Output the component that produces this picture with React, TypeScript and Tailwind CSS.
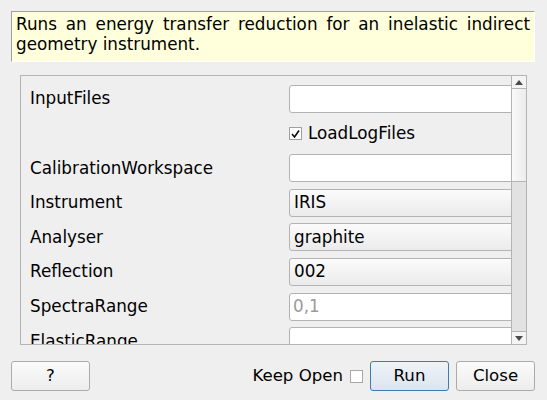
import React from "react";

const font = { fontFamily: '"DejaVu Sans", "Liberation Sans", sans-serif' };

function Label({ children }: { children: React.ReactNode }) {
  return <div className="w-[268px] shrink-0 pl-[9px] text-[16.8px] text-black whitespace-nowrap">{children}</div>;
}

function LineEdit({ placeholder }: { placeholder?: string }) {
  return (
    <div className="w-[260px] shrink-0 h-[28px] bg-white border border-[#b3b3b3] rounded-[3px] flex items-center pl-[3px] text-[16.8px] text-[#9a9a9a]">
      {placeholder}
    </div>
  );
}

function Combo({ value }: { value: string }) {
  return (
    <div className="w-[260px] shrink-0 h-[28px] border border-[#b3b3b3] rounded-[3px] flex items-center pl-[4px] text-[16.8px] text-black bg-gradient-to-b from-[#fbfbfb] to-[#ebebeb]">
      {value}
    </div>
  );
}

function Arrow({ down }: { down?: boolean }) {
  return (
    <svg width="8" height="5" viewBox="0 0 8 5">
      {down ? <polygon points="0,0 8,0 4,5" fill="#4a4a4a" /> : <polygon points="0,5 8,5 4,0" fill="#4a4a4a" />}
    </svg>
  );
}

function Button({ children, primary }: { children: React.ReactNode; primary?: boolean }) {
  return (
    <div
      className={
        "w-[79px] h-[30px] shrink-0 rounded-[3px] border flex items-center justify-center text-[16.6px] text-black " +
        (primary
          ? "border-[#3d7ab3] bg-gradient-to-b from-[#eef3f8] to-[#dce5ee]"
          : "border-[#ababab] bg-gradient-to-b from-[#fbfbfb] to-[#ededed]")
      }
    >
      {children}
    </div>
  );
}

function Row({ children }: { children: React.ReactNode }) {
  return <div className="flex items-center h-[28px] shrink-0">{children}</div>;
}

export default function App() {
  return (
    <div className="w-[547px] h-[400px] bg-[#efefef] overflow-hidden flex flex-col" style={font}>
      <div className="ml-[11px] mt-[11px] w-[524px] h-[51px] shrink-0 bg-[#ffffdc] border border-t-[#a0a0a0] border-l-[#a0a0a0] border-r-[#ffffff] border-b-[#ffffff] pl-[4px] pr-[4px] pt-[3px] text-[16.8px] leading-[19.5px] text-black text-justify">
        Runs an energy transfer reduction for an inelastic indirect geometry instrument.
      </div>

      <div className="ml-[20px] mt-[13px] w-[507px] h-[270px] shrink-0 border border-[#b4b4b4] flex">
        <div className="flex-1 overflow-hidden pt-[9px] flex flex-col gap-[6.6px]">
          <Row>
            <Label>InputFiles</Label>
            <LineEdit />
          </Row>
          <Row>
            <Label>{""}</Label>
            <div className="flex items-center">
              <div className="w-[13px] h-[13px] bg-white border border-[#a0a0a0] flex items-center justify-center">
                <svg width="9" height="8" viewBox="0 0 9 8">
                  <path d="M1 4 L3.5 7 L8 0.5" stroke="#111" strokeWidth="1.6" fill="none" />
                </svg>
              </div>
              <span className="ml-[6px] text-[16.8px] text-black">LoadLogFiles</span>
            </div>
          </Row>
          <Row>
            <Label>CalibrationWorkspace</Label>
            <LineEdit />
          </Row>
          <Row>
            <Label>Instrument</Label>
            <Combo value="IRIS" />
          </Row>
          <Row>
            <Label>Analyser</Label>
            <Combo value="graphite" />
          </Row>
          <Row>
            <Label>Reflection</Label>
            <Combo value="002" />
          </Row>
          <Row>
            <Label>SpectraRange</Label>
            <LineEdit placeholder="0,1" />
          </Row>
          <Row>
            <Label>ElasticRange</Label>
            <LineEdit />
          </Row>
        </div>
        <div className="w-[15px] shrink-0 border-l border-[#b4b4b4] flex flex-col">
          <div className="h-[13px] shrink-0 border-b border-[#b4b4b4] bg-[#f4f4f4] flex items-center justify-center">
            <Arrow />
          </div>
          <div className="h-[93px] shrink-0 border-b border-[#b4b4b4] bg-gradient-to-r from-[#fafafa] to-[#ececec]" />
          <div className="flex-1 bg-[#e2e2e2]" />
          <div className="h-[13px] shrink-0 border-t border-[#b4b4b4] bg-[#f4f4f4] flex items-center justify-center">
            <Arrow down />
          </div>
        </div>
      </div>

      <div className="ml-[11px] mt-[16px] w-[524px] flex items-center">
        <Button>?</Button>
        <div className="flex-1" />
        <span className="text-[16.6px] text-black">Keep Open</span>
        <div className="ml-[7px] w-[13px] h-[13px] bg-white border border-[#a8a8a8]" />
        <div className="ml-[7px]">
          <Button primary>Run</Button>
        </div>
        <div className="ml-[7px]">
          <Button>Close</Button>
        </div>
      </div>
    </div>
  );
}
